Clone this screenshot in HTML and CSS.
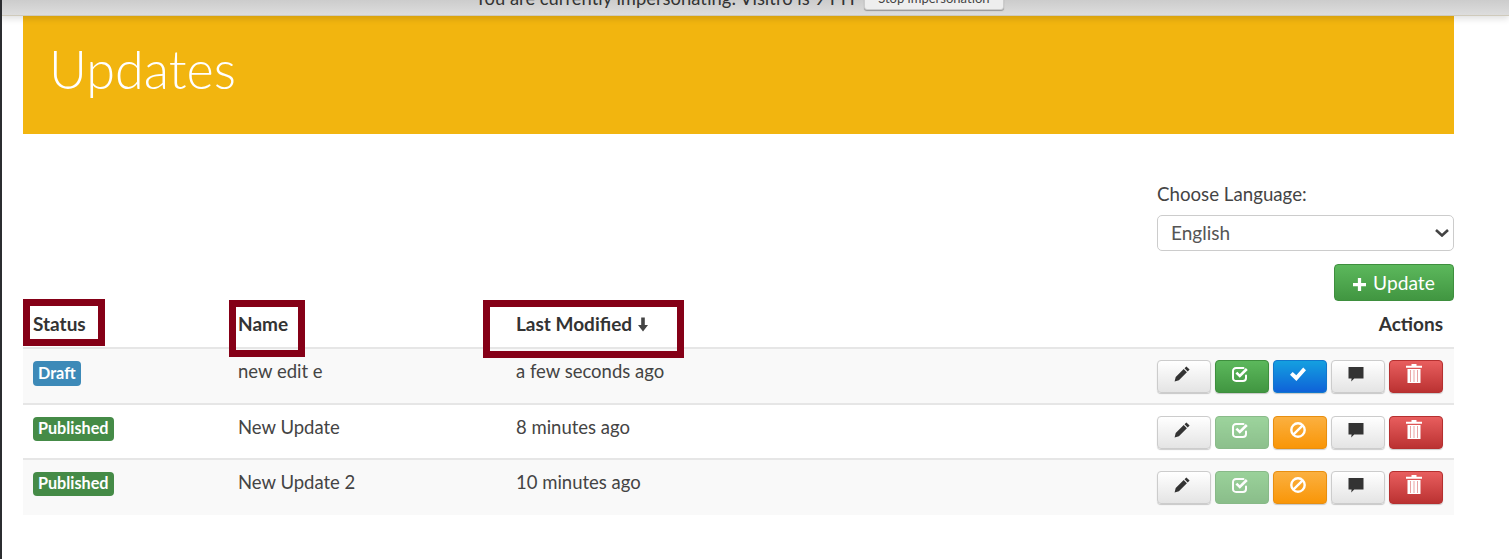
FILE: index.html
```html
<!DOCTYPE html>
<html lang="en">
<head>
<meta charset="utf-8">
<title>Updates</title>
<link rel="stylesheet" href="styles.css">
</head>
<body>
<header class="imp-bar">
  <span class="imp-text">You are currently impersonating: Visitro is 9 PH</span>
  <button class="imp-btn">Stop impersonation</button>
</header>
<main class="page">
  <section class="hero"><h1>Updates</h1></section>
  <div class="lang">
    <label class="lang-label" for="lang">Choose Language:</label>
    <select id="lang" class="lang-select"><option>English</option></select>
    <button class="add-btn"><svg class="plus" viewBox="0 0 12 12"><path d="M4.5 0h3v4.5H12v3H7.5V12h-3V7.5H0v-3h4.5z"/></svg> Update</button>
  </div>
  <table class="grid">
    <colgroup><col class="c1"><col class="c2"><col class="c3"><col></colgroup>
    <thead>
      <tr>
        <th>Status</th>
        <th>Name</th>
        <th>Last Modified <svg class="sort" viewBox="0 0 12 14"><path d="M4.2 0h3.6v7.4H11L6 14 1 7.4h3.2z"/></svg></th>
        <th class="right">Actions</th>
      </tr>
    </thead>
    <tbody>
      <tr class="odd">
        <td><span class="tag draft">Draft</span></td>
        <td>new edit e</td>
        <td>a few seconds ago</td>
        <td class="actions">
          <button class="btn b-def"><svg viewBox="0 0 16 16"><use href="#i-pen"/></svg></button>
          <button class="btn b-grn"><svg viewBox="0 0 16 16"><use href="#i-chk"/></svg></button>
          <button class="btn b-blu"><svg viewBox="0 0 16 16"><use href="#i-ok"/></svg></button>
          <button class="btn b-def"><svg viewBox="0 0 16 16"><use href="#i-msg"/></svg></button>
          <button class="btn b-red"><svg class="bin" viewBox="0 0 16 19"><use href="#i-trash"/></svg></button>
        </td>
      </tr>
      <tr>
        <td><span class="tag pub">Published</span></td>
        <td>New Update</td>
        <td>8 minutes ago</td>
        <td class="actions">
          <button class="btn b-def"><svg viewBox="0 0 16 16"><use href="#i-pen"/></svg></button>
          <button class="btn b-grn off"><svg viewBox="0 0 16 16"><use href="#i-chk"/></svg></button>
          <button class="btn b-org"><svg viewBox="0 0 16 16"><use href="#i-ban"/></svg></button>
          <button class="btn b-def"><svg viewBox="0 0 16 16"><use href="#i-msg"/></svg></button>
          <button class="btn b-red"><svg class="bin" viewBox="0 0 16 19"><use href="#i-trash"/></svg></button>
        </td>
      </tr>
      <tr class="odd">
        <td><span class="tag pub">Published</span></td>
        <td>New Update 2</td>
        <td>10 minutes ago</td>
        <td class="actions">
          <button class="btn b-def"><svg viewBox="0 0 16 16"><use href="#i-pen"/></svg></button>
          <button class="btn b-grn off"><svg viewBox="0 0 16 16"><use href="#i-chk"/></svg></button>
          <button class="btn b-org"><svg viewBox="0 0 16 16"><use href="#i-ban"/></svg></button>
          <button class="btn b-def"><svg viewBox="0 0 16 16"><use href="#i-msg"/></svg></button>
          <button class="btn b-red"><svg class="bin" viewBox="0 0 16 19"><use href="#i-trash"/></svg></button>
        </td>
      </tr>
    </tbody>
  </table>
  <div class="mark m-status"></div>
  <div class="mark m-name"></div>
  <div class="mark m-mod"></div>
</main>
<svg class="defs" width="0" height="0" aria-hidden="true">
  <defs>
    <symbol id="i-pen" viewBox="0 0 16 16"><path fill="currentColor" d="M12.4.4l3.2 3.2-1.9 1.9-3.2-3.2zM9.7 3.1l3.2 3.2-8 8-4.3 1.3 1.1-4.5z"/></symbol>
    <symbol id="i-chk" viewBox="0 0 16 16"><path fill="none" stroke="currentColor" stroke-width="2" stroke-linecap="round" d="M14 9.5v2.4c0 1.9-1.2 3.1-3.1 3.1H4.1C2.2 15 1 13.8 1 11.9V5.1C1 3.2 2.2 2 4.1 2h7.4"/><path fill="none" stroke="currentColor" stroke-width="2.6" d="M4.4 6.6l3.4 3.4 7-7"/></symbol>
    <symbol id="i-ok" viewBox="0 0 16 16"><path fill="currentColor" d="M13.2 1.4L16 4.3 6.4 15 0 8.8l2.7-2.9 3.6 3.3z"/></symbol>
    <symbol id="i-ban" viewBox="0 0 16 16"><circle cx="8" cy="8" r="6.7" fill="none" stroke="currentColor" stroke-width="2.4"/><path stroke="currentColor" stroke-width="2.4" d="M3.3 12.7l9.4-9.4"/></symbol>
    <symbol id="i-msg" viewBox="0 0 16 16"><path fill="currentColor" d="M.5 1h15v11.500H6.200l-3 3 .4-3H.5z"/></symbol>
    <symbol id="i-trash" viewBox="0 0 16 19"><path fill="currentColor" d="M5.5 0h5v1.800H16v2H0v-2h5.500zM1.500 5h13v14h-13z"/><path stroke="#e9a3a3" stroke-width="1" d="M4.500 6v12M8 6v12M11.500 6v12"/></symbol>
  </defs>
</svg>
</body>
</html>
```
FILE: styles.css
```css
* { box-sizing: border-box; }
html, body { margin: 0; height: 100%; }
body {
  background: #fff;
  font-family: Lato, "Liberation Sans", sans-serif;
  color: #444;
  font-size: 18.5px;
  border-left: 2px solid #2b2d30;
  overflow: hidden;
}
.defs { position: absolute; }
.imp-bar {
  height: 16px;
  margin-left: -2px;
  background: linear-gradient(#cccccc, #dddddd);
  border-bottom: 1px solid #cfcabb;
  display: flex;
  justify-content: center;
  align-items: flex-end;
  gap: 9px;
  overflow: hidden;
  font-size: 18.4px;
  line-height: 22px;
  color: #333;
  padding-right: 30px;
  box-shadow: 0 3px 6px rgba(0, 0, 0, .12);
  position: relative;
  z-index: 1;
}
.imp-text { flex: none; margin-bottom: 6px; }
.imp-btn {
  flex: none;
  height: 24px;
  width: 140px;
  margin-bottom: 5px;
  font: 13px Lato, sans-serif;
  color: #444;
  border: 1px solid #ccc;
  border-radius: 3px;
  background: #eee;
  padding: 0;
  box-shadow: 0 1px 1px rgba(0,0,0,.3);
}
.page { position: relative; padding: 0 0 0 21px; width: 1452px; }
.hero {
  background: #f2b50f;
  height: 118px;
  padding: 18px 0 0 26px;
}
.hero h1 {
  margin: 0;
  font-weight: 300;
  font-size: 52.200px;
  line-height: 70px;
  color: #fff;
}
.lang {
  display: flex;
  flex-direction: column;
  align-items: flex-end;
  padding-top: 49px;
}
.lang-label { width: 297px; line-height: 22px; font-size: 18.7px; color: #444; }
.lang-select {
  width: 297px;
  height: 36px;
  margin-top: 10px;
  padding: 0 0 2px 13px;
  font: 19px Lato, sans-serif;
  color: #555;
  border: 1px solid #ccc;
  border-radius: 5px;
  appearance: none;
  background: #fff url("data:image/svg+xml,%3Csvg xmlns='http://www.w3.org/2000/svg' viewBox='0 0 14 8'%3E%3Cpath fill='none' stroke='%23444' stroke-width='2.600' d='M1 1l6 5.500L13 1'/%3E%3C/svg%3E") no-repeat right 4px center / 14px 8px;
}
.add-btn {
  margin-top: 13px;
  width: 120px;
  height: 37px;
  font: 19.2px Lato, sans-serif;
  color: #fff;
  background: linear-gradient(#5cb85c, #419641);
  border: 1px solid #3e8f3e;
  border-radius: 4px;
  padding: 0;
}
.plus { width: 13px; height: 13px; fill: #fff; vertical-align: -1px; margin-right: 2px; }
.grid { width: 100%; border-collapse: collapse; table-layout: fixed; margin-top: -1px; }
.c1 { width: 205px; }
.c2 { width: 278px; }
.c3 { width: 400px; }
.grid th {
  text-align: left;
  font-weight: 700;
  font-size: 19px;
  height: 48px;
  padding: 11px 10px 0;
  color: #333;
  border-bottom: 2px solid #e6e6e6;
  vertical-align: top;
  line-height: 26px;
}
.grid th.right { text-align: right; padding-right: 11px; }
.sort { width: 12px; height: 15px; fill: #444; vertical-align: -1px; }
.grid td {
  height: 55.5px;
  padding: 9px 10px 0;
  vertical-align: top;
  border-top: 2px solid #e6e6e6;
  line-height: 26px;
}
.grid thead + tbody tr:first-child td { border-top: 0; }
.odd td { background: #f9f9f9; }
.tag {
  display: inline-block;
  padding: 0 5px;
  margin-top: 3px;
  font-size: 16.2px;
  font-weight: 700;
  color: #fff;
  border-radius: 4px;
  vertical-align: top;
}
.draft { background: #3d8ab8; height: 25px; line-height: 23px; }
.pub { background: #458b47; height: 24px; line-height: 22px; }
.grid td.actions { text-align: right; padding: 11px 11px 0 0; font-size: 0; line-height: 0; white-space: nowrap; }
.btn {
  display: inline-flex;
  justify-content: center;
  align-items: flex-start;
  width: 54px;
  height: 33px;
  margin-left: 4px;
  padding: 5px 5px 0 0;
  border: 1px solid #ccc;
  border-radius: 4px;
  vertical-align: top;
  box-shadow: 0 1px 1px rgba(0,0,0,.2);
}
.btn svg { width: 16px; height: 16px; display: block; }
.btn svg.bin { height: 19px; margin-top: -2px; }
.b-def { background: linear-gradient(#fff, #e4e4e4); color: #333; border-color: #ccc; }
.b-grn { background: linear-gradient(#5cb85c, #419641); color: #fff; border-color: #3e8f3e; }
.b-grn.off { opacity: .6; box-shadow: none; }
.b-blu { background: linear-gradient(#14a0e0, #0f62d8); color: #fff; border-color: #1177cc; }
.b-org { background: linear-gradient(#fbb040, #f99608); color: #fff; border-color: #e88f10; }
.b-red { background: linear-gradient(#e85e5e, #bb3232); color: #fff; border-color: #b53030; }
.mark { position: absolute; border: 7px solid #850017; }
.m-status { left: 21px; top: 283px; width: 82px; height: 47px; }
.m-name { left: 227px; top: 284px; width: 76px; height: 57px; }
.m-mod { left: 481px; top: 284px; width: 201px; height: 58px; }
```
